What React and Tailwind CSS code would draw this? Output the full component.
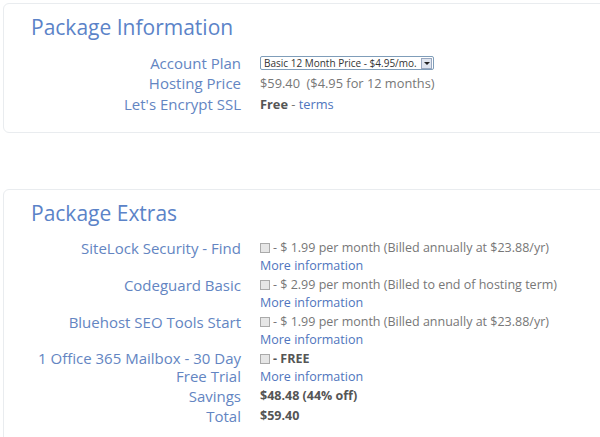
import React from 'react';

const Row = ({ label, children, className = '' }) => (
  <div className={`flex ${className}`}>
    <div className="w-[237px] shrink-0 text-right text-[15px] leading-[18px] text-[#6385c2]">{label}</div>
    <div className="pl-[19px] text-[12.5px] leading-[18px] text-[#777]">{children}</div>
  </div>
);

const Box = () => (
  <span className="inline-block w-[10px] h-[10px] border border-[#aaa] bg-[#e6e6e6] align-[-1px] mr-[3px]" />
);

const Extra = ({ label, price }) => (
  <Row label={label}>
    <div><Box />{price}</div>
    <div className="text-[#4f75bd]">More information</div>
  </Row>
);

export default function App() {
  return (
    <div className="w-full h-[437px] overflow-hidden bg-white pt-[3px] pl-[3px] font-['Open_Sans',sans-serif]">
      <div className="w-[640px] h-[130px] border border-[#e9ecef] rounded-[6px] pt-[9px]">
        <h2 className="pl-[27px] text-[21px] leading-[28px] text-[#5b83c8]">Package Information</h2>
        <div className="mt-[13px] space-y-[2px]">
          <Row label="Account Plan">
            <div className="flex items-center h-[14px] w-[174px] border border-[#7f9db9] rounded-[2px] mt-[2px] pl-[3px] text-[10px] leading-[12px] text-[#333]">
              <span className="flex-1">Basic 12 Month Price - $4.95/mo.</span>
              <span className="w-[11px] h-[11px] mr-[1px] border border-[#9aa8c0] bg-[#dfe5ef] flex items-center justify-center">
                <span className="w-0 h-0 border-l-[3px] border-r-[3px] border-t-[3px] border-l-transparent border-r-transparent border-t-[#222]" />
              </span>
            </div>
          </Row>
          <Row label="Hosting Price">
            <span className="text-[12.8px]">$59.40&nbsp; ($4.95 for 12 months)</span>
          </Row>
          <Row label="Let's Encrypt SSL">
            <span className="text-[12.8px]"><b className="text-[#555]">Free</b> - <span className="text-[#4f75bd]">terms</span></span>
          </Row>
        </div>
      </div>

      <div className="mt-[56px] w-[640px] h-[300px] border border-[#e9ecef] rounded-[6px] pt-[9px]">
        <h2 className="pl-[27px] text-[21px] leading-[28px] text-[#5b83c8]">Package Extras</h2>
        <div className="mt-[12px] space-y-[1px]">
          <Extra label="SiteLock Security - Find" price="- $ 1.99 per month (Billed annually at $23.88/yr)" />
          <Extra label="Codeguard Basic" price="- $ 2.99 per month (Billed to end of hosting term)" />
          <Extra label="Bluehost SEO Tools Start" price="- $ 1.99 per month (Billed annually at $23.88/yr)" />
          <Row label={<><div className="leading-[17px]">1 Office 365 Mailbox - 30 Day</div><div className="leading-[19px]">Free Trial</div></>}>
            <div><Box /><b className="text-[#555]">- FREE</b></div>
            <div className="text-[#4f75bd]">More information</div>
          </Row>
          <Row label="Savings">
            <b className="text-[#555]">$48.48 (44% off)</b>
          </Row>
          <Row label="Total" className="pt-[1px]">
            <b className="text-[#555]">$59.40</b>
          </Row>
        </div>
      </div>
    </div>
  );
}
